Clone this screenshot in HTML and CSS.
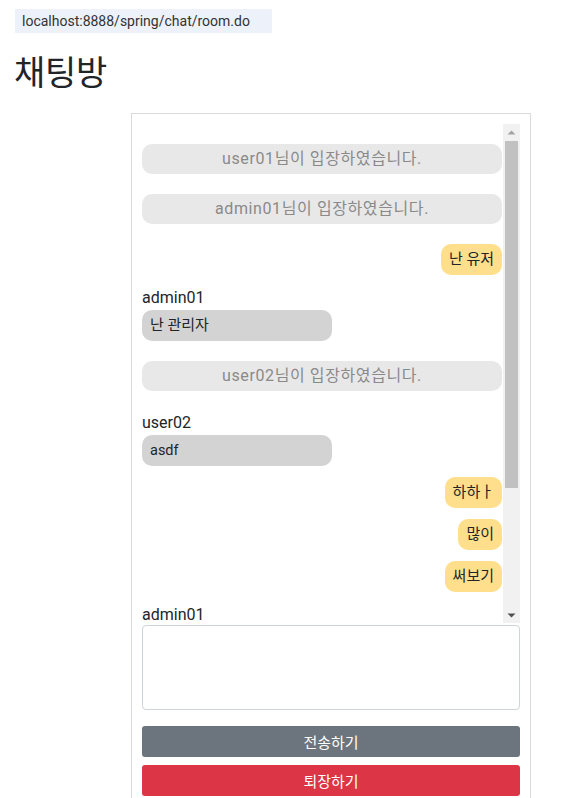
FILE: index.html
```html
<!DOCTYPE html>
<html lang="ko">
<head>
<meta charset="utf-8">
<title>채팅방</title>
<link rel="stylesheet" href="styles.css">
</head>
<body>
<div class="urlbar">localhost:8888/spring/chat/room.do</div>
<h1 class="title">채팅방</h1>
<div class="room">
  <div class="chat">
    <div class="messages">
      <div class="sys">user01님이 입장하였습니다.</div>
      <div class="sys">admin01님이 입장하였습니다.</div>
      <div class="row mine"><div class="bubble me">난 유저</div></div>
      <div class="row other"><div class="name">admin01</div><div class="bubble you">난 관리자</div></div>
      <div class="sys">user02님이 입장하였습니다.</div>
      <div class="row other"><div class="name">user02</div><div class="bubble you latin">asdf</div></div>
      <div class="row mine"><div class="bubble me">하하ㅏ</div></div>
      <div class="row mine"><div class="bubble me">많이</div></div>
      <div class="row mine"><div class="bubble me">써보기</div></div>
      <div class="row other"><div class="name">admin01</div></div>
    </div>
    <div class="scrollbar">
      <div class="sb-btn">
        <svg width="17" height="17" viewBox="0 0 17 17"><polygon points="4.5,10.5 8.5,6.5 12.5,10.5" fill="#a3a3a3"/></svg>
      </div>
      <div class="sb-thumb"></div>
      <div class="sb-track"></div>
      <div class="sb-btn">
        <svg width="17" height="17" viewBox="0 0 17 17"><polygon points="4.5,7.5 12.5,7.5 8.5,11.5" fill="#505050"/></svg>
      </div>
    </div>
  </div>
  <textarea class="input"></textarea>
  <button class="btn send">전송하기</button>
  <button class="btn exit">퇴장하기</button>
</div>
</body>
</html>
```
FILE: styles.css
```css
html, body {
  margin: 0;
  padding: 0;
  background: #fff;
}
body {
  font-family: Roboto, "Noto Sans CJK KR", sans-serif;
  font-size: 16px;
  color: #212529;
}
.urlbar {
  margin: 9px 0 0 15px;
  width: 250px;
  height: 24px;
  line-height: 24px;
  padding-left: 7px;
  background: #edf1fa;
  color: #333;
  font-size: 14px;
}
.title {
  margin: 20px 0 20px 14px;
  font-size: 34px;
  line-height: 40px;
  font-weight: 400;
  letter-spacing: -0.3px;
  color: #212529;
}
.room {
  margin-left: 131px;
  width: 378px;
  padding: 10px;
  border: 1px solid #dadada;
  border-bottom: 0;
}
.chat {
  display: flex;
  height: 499px;
}
.messages {
  flex: 1;
  overflow: hidden;
}
.scrollbar {
  width: 17px;
  display: flex;
  flex-direction: column;
  background: #f1f1f1;
}
.sb-btn {
  height: 17px;
}
.sb-btn svg {
  display: block;
}
.sb-thumb {
  height: 347px;
  margin: 0 2px;
  background: #c1c1c1;
}
.sb-track {
  flex: 1;
}
.sys {
  margin: 20px 1px 20px 0;
  height: 30px;
  line-height: 30px;
  border-radius: 10px;
  background: #e8e8e8;
  color: #8a8a8a;
  text-align: center;
  font-size: 16px;
  letter-spacing: 0.6px;
}
.row {
  margin: 11px 1px 11px 0;
}
.mine {
  display: flex;
  justify-content: flex-end;
}
.name {
  line-height: 24px;
  font-size: 16px;
}
.bubble {
  height: 31px;
  line-height: 31px;
  padding: 0 8px;
  border-radius: 10px;
  font-size: 15px;
  box-sizing: border-box;
}
.me {
  background: #ffdf8c;
}
.you {
  width: 190px;
  background: #d3d3d3;
}
.latin {
  font-size: 14.5px;
}
.input {
  display: block;
  box-sizing: border-box;
  width: 378px;
  height: 85px;
  margin: 2px 0 0;
  border: 1px solid #ced4da;
  border-radius: 4px;
  resize: none;
  font-family: inherit;
}
.btn {
  display: block;
  width: 378px;
  height: 31px;
  border: 1px solid transparent;
  border-radius: 3px;
  color: #fff;
  font-family: inherit;
  font-size: 15px;
  padding: 0;
}
.send {
  margin-top: 16px;
  background: #6c757d;
}
.exit {
  margin-top: 8px;
  background: #dc3545;
}
```
